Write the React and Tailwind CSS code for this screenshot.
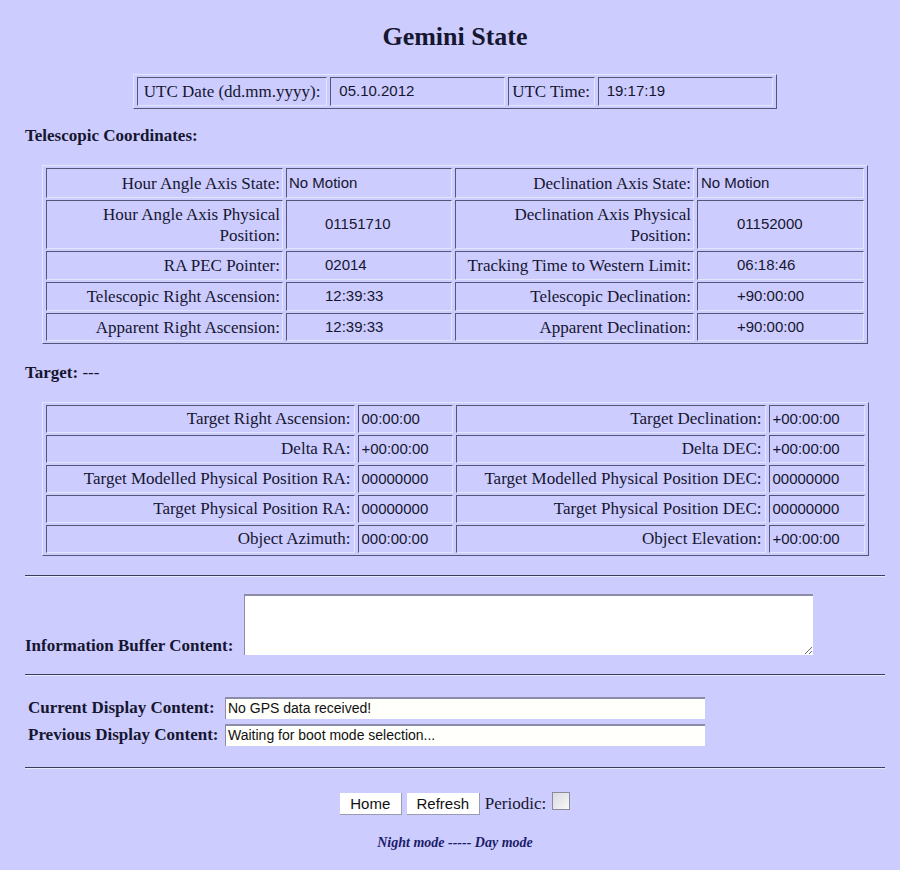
import React from "react";

const serif = "font-['Liberation_Serif','Times_New_Roman',serif]";
const sans = "font-['Liberation_Sans',Arial,sans-serif]";

// inset cell borders like an old border="1" table
const cell =
  "border border-t-[#55557a] border-l-[#55557a] border-b-[#e4e4fa] border-r-[#e4e4fa] p-0";
const tableBox =
  "border border-t-[#e4e4fa] border-l-[#e4e4fa] border-b-[#55557a] border-r-[#55557a] border-separate border-spacing-x-[3px] border-spacing-y-[2px] table-fixed";

const telescopic = [
  ["Hour Angle Axis State:", "No Motion", false, "Declination Axis State:", "No Motion", false, "h-[30px]"],
  ["Hour Angle Axis Physical Position:", "01151710", true, "Declination Axis Physical Position:", "01152000", true, "h-[49px]"],
  ["RA PEC Pointer:", "02014", true, "Tracking Time to Western Limit:", "06:18:46", true, "h-[29px]"],
  ["Telescopic Right Ascension:", "12:39:33", true, "Telescopic Declination:", "+90:00:00", true, "h-[29px]"],
  ["Apparent Right Ascension:", "12:39:33", true, "Apparent Declination:", "+90:00:00", true, "h-[28px]"],
];

const target = [
  ["Target Right Ascension:", "00:00:00", "Target Declination:", "+00:00:00"],
  ["Delta RA:", "+00:00:00", "Delta DEC:", "+00:00:00"],
  ["Target Modelled Physical Position RA:", "00000000", "Target Modelled Physical Position DEC:", "00000000"],
  ["Target Physical Position RA:", "00000000", "Target Physical Position DEC:", "00000000"],
  ["Object Azimuth:", "000:00:00", "Object Elevation:", "+00:00:00"],
];

function Rule() {
  return <div className="h-[2px] w-[860px] border-t border-t-[#3c3c5a] border-b border-b-[#e8e8ff]" />;
}

export default function App() {
  return (
    <div className={`min-h-[870px] bg-[#ccccff] text-[#161630] ${serif} pl-[25px] pr-[15px] pt-[22px]`}>
      <h1 className="text-center text-[26px] font-bold leading-[30px]">Gemini State</h1>

      {/* UTC date / time */}
      <table className={`${tableBox} mx-auto mt-[22px] w-[644px]`}>
        <tbody>
          <tr className="h-[29px]">
            <td className={`${cell} w-[190px] text-[17px] text-center`}>UTC Date (dd.mm.yyyy):</td>
            <td className={`${cell} w-[174px] ${sans} text-[15px] pl-[8px]`}>05.10.2012</td>
            <td className={`${cell} w-[87px] text-[17px] text-center`}>UTC Time:</td>
            <td className={`${cell} w-[175px] ${sans} text-[15px] pl-[8px]`}>19:17:19</td>
          </tr>
        </tbody>
      </table>

      <div className="mt-[17px] text-[17px] font-bold leading-[20px]">Telescopic Coordinates:</div>

      <table className={`${tableBox} mx-auto mt-[19px] w-[826px]`}>
        <tbody>
          {telescopic.map((r, i) => (
            <tr key={i} className={r[6]}>
              <td className={`${cell} w-[237px] text-right text-[17px] leading-[21px] pr-[2px] pl-[18px]`}>{r[0]}</td>
              <td className={`${cell} w-[166px] ${sans} text-[15px] ${r[2] ? "pl-[38px]" : "pl-[2px]"}`}>{r[1]}</td>
              <td className={`${cell} w-[239px] text-right text-[17px] leading-[21px] pr-[2px] pl-[2px]`}>{r[3]}</td>
              <td className={`${cell} w-[167px] ${sans} text-[15px] ${r[5] ? "pl-[39px]" : "pl-[3px]"}`}>{r[4]}</td>
            </tr>
          ))}
        </tbody>
      </table>

      <div className="mt-[19px] text-[17px] leading-[20px]">
        <b>Target:</b> ---
      </div>

      <table className={`${tableBox} mx-auto mt-[19px] w-[826px]`}>
        <tbody>
          {target.map((r, i) => (
            <tr key={i} className="h-[28px]">
              <td className={`${cell} w-[309px] text-right text-[17px] pr-[3px]`}>{r[0]}</td>
              <td className={`${cell} w-[95px] ${sans} text-[15px] pl-[3px]`}>{r[1]}</td>
              <td className={`${cell} w-[310px] text-right text-[17px] pr-[3px]`}>{r[2]}</td>
              <td className={`${cell} w-[96px] ${sans} text-[15px] pl-[3px]`}>{r[3]}</td>
            </tr>
          ))}
        </tbody>
      </table>

      <div className="mt-[19px]">
        <Rule />
      </div>

      <div className="mt-[17px] flex items-end gap-[11px]">
        <span className="text-[17px] font-bold leading-[18px]">Information Buffer Content:</span>
        <textarea
          className="block h-[61px] w-[569px] bg-white border-t-2 border-l border-t-[#8c8ca8] border-l-[#8c8ca8] outline-none"
          readOnly
        />
      </div>

      <div className="mt-[19px]">
        <Rule />
      </div>

      <div className="mt-[21px] flex flex-col gap-[5px] pl-[3px]">
        {[
          ["Current Display Content:", "No GPS data received!"],
          ["Previous Display Content:", "Waiting for boot mode selection..."],
        ].map(([l, v]) => (
          <div key={l} className="flex items-center">
            <span className="w-[197px] text-[17px] font-bold leading-[20px]">{l}</span>
            <div className={`h-[22px] w-[480px] bg-[#fffffb] border-t-2 border-l border-t-[#8c8ca8] border-l-[#8c8ca8] ${sans} text-[14px] leading-[19px] pl-[2px] text-[#111]`}>
              {v}
            </div>
          </div>
        ))}
      </div>

      <div className="mt-[21px]">
        <Rule />
      </div>

      <div className="mt-[22px] flex items-center justify-center gap-[5px]">
        <button className={`h-[22px] w-[62px] bg-white border-r border-b border-r-[#9a9ab0] border-b-[#9a9ab0] ${sans} text-[15px] text-[#111]`}>
          Home
        </button>
        <button className={`h-[22px] w-[73px] bg-white border-r border-b border-r-[#9a9ab0] border-b-[#9a9ab0] ${sans} text-[15px] text-[#111]`}>
          Refresh
        </button>
        <span className="text-[17px]">Periodic:</span>
        <span className="-mt-[6px] ml-[1px] inline-block h-[18px] w-[18px] border border-[#8a8a9a] bg-gradient-to-br from-[#d8d8e0] to-[#fafafa]" />
      </div>

      <div className="mt-[15px] text-center text-[14px] font-bold italic text-[#1c1c6a]">
        Night mode ----- Day mode
      </div>
    </div>
  );
}
